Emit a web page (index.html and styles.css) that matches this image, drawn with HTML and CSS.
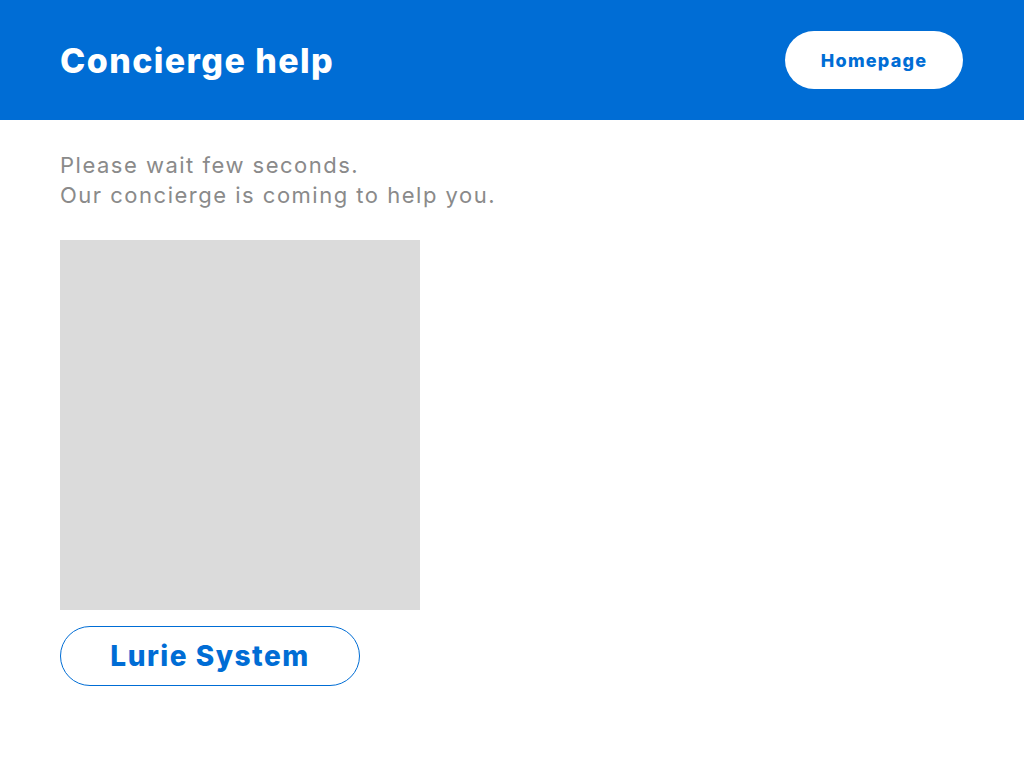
FILE: index.html
```html
<!DOCTYPE html>
<html>
<head>
<meta charset="utf-8">
<link rel="stylesheet" href="styles.css">
</head>
<body>
<header class="topbar">
  <h1 class="title">Concierge help</h1>
  <button class="home-btn">Homepage</button>
</header>
<main class="content">
  <p class="message">Please wait few seconds.<br>Our concierge is coming to help you.</p>
  <div class="video"></div>
  <button class="system-btn">Lurie System</button>
</main>
</body>
</html>
```
FILE: styles.css
```css
* { box-sizing: border-box; }
body {
  margin: 0;
  font-family: Inter, "Noto Sans", sans-serif;
  background: #fff;
}
.topbar {
  height: 120px;
  background: #006dd5;
  display: flex;
  align-items: center;
  justify-content: space-between;
  padding: 0 61px 0 60px;
}
.title {
  margin: 0;
  color: #fff;
  font-size: 34px;
  font-weight: 800;
  letter-spacing: 1.4px;
}
.home-btn {
  width: 178px;
  height: 58px;
  border: none;
  border-radius: 29px;
  background: #fff;
  color: #006dd5;
  font-family: inherit;
  font-size: 18px;
  font-weight: 800;
  letter-spacing: 1.2px;
}
.content {
  padding: 30px 60px;
  display: flex;
  flex-direction: column;
  align-items: flex-start;
}
.message {
  margin: 0 0 30px;
  color: #8a8a8a;
  font-size: 22px;
  line-height: 30px;
  letter-spacing: 1.5px;
}
.video {
  width: 360px;
  height: 370px;
  background: #dbdbdb;
}
.system-btn {
  margin-top: 16px;
  width: 300px;
  height: 60px;
  border: 1px solid #006dd5;
  border-radius: 30px;
  background: #fff;
  color: #006dd5;
  font-family: inherit;
  font-size: 28px;
  font-weight: 800;
  letter-spacing: 1.5px;
}
```
